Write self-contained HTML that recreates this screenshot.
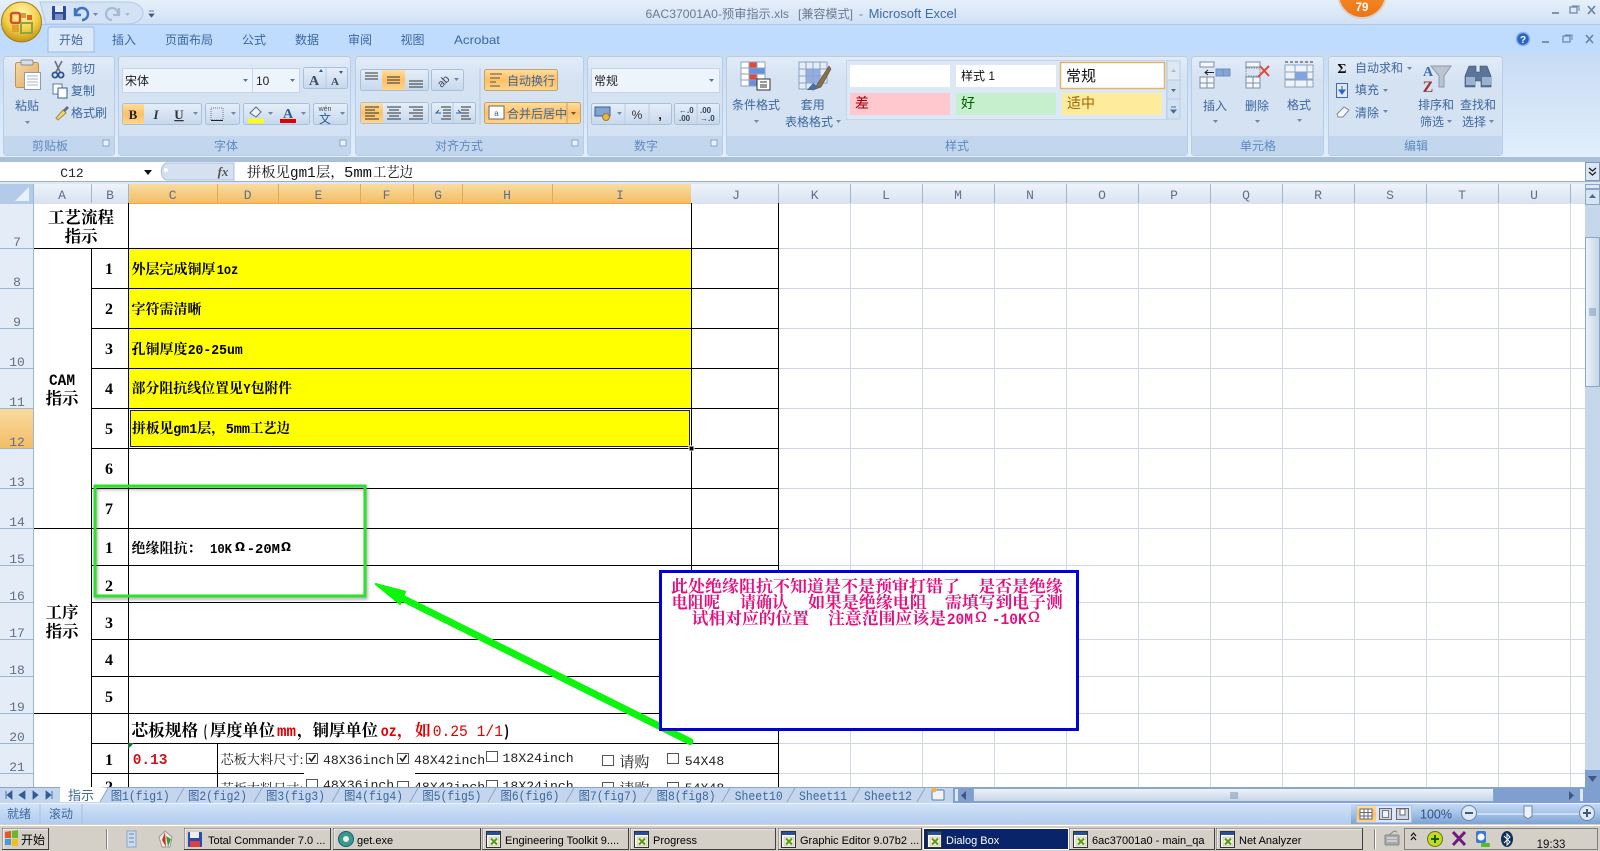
<!DOCTYPE html>
<html><head><meta charset="utf-8"><title>Excel</title>
<style>
html,body{margin:0;padding:0;background:#fff;width:1600px;height:851px;overflow:hidden}
svg{display:block}
text{white-space:pre}
.r{font:12px "Liberation Sans","Noto Sans CJK SC",sans-serif;fill:#3d679f}
.g{font:12px "Liberation Sans","Noto Sans CJK SC",sans-serif;fill:#5f89bf}
.c{font:bold 14px "Noto Serif CJK SC",serif;fill:#000}
.cl{font:bold 14px "Liberation Mono",monospace;fill:#000}
.n{font:bold 16px "Liberation Serif",serif;fill:#000;text-anchor:middle}
.h{font:bold 16.5px "Noto Serif CJK SC",serif;fill:#000;text-anchor:middle}
.h2{font:bold 16.3px "Noto Serif CJK SC",serif;fill:#000}
.h3{font:bold 16px "Liberation Mono",monospace;fill:#000}
.red{fill:#e00000}
.hd{font:13px "Liberation Mono",monospace;fill:#5e7089;text-anchor:middle}
.m{font:bold 16.6px "Noto Serif CJK SC",serif;fill:#e3107f}
.ml{font:bold 16px "Liberation Mono",monospace;fill:#e3107f}
.s{font:13px "Noto Serif CJK SC",serif;fill:#222}
.mo{font:13.2px "Liberation Mono",monospace;fill:#222}
.t{font:12.5px "Liberation Mono","Noto Sans CJK SC",monospace;fill:#3d679f}
.b{font:11px "Liberation Sans","Noto Sans CJK SC",sans-serif;fill:#000}
.f{font:14.3px "Noto Serif CJK SC",serif;fill:#111}
.fl{font:14.3px "Liberation Mono",monospace;fill:#111}
.mid{text-anchor:middle}
</style></head><body>
<svg xmlns="http://www.w3.org/2000/svg" width="1600" height="851" viewBox="0 0 1600 851">
<defs>
<linearGradient id="tb" x1="0" y1="0" x2="0" y2="1"><stop offset="0" stop-color="#e6f0fb"/><stop offset="1" stop-color="#cfe0f5"/></linearGradient>
<linearGradient id="rb" x1="0" y1="0" x2="0" y2="1"><stop offset="0" stop-color="#c6dbf5"/><stop offset="1" stop-color="#e2effc"/></linearGradient>
<linearGradient id="gp" x1="0" y1="0" x2="0" y2="1"><stop offset="0" stop-color="#e2ecf8"/><stop offset=".25" stop-color="#d5e2f2"/><stop offset="1" stop-color="#d3e2f3"/></linearGradient>
<linearGradient id="bt" x1="0" y1="0" x2="0" y2="1"><stop offset="0" stop-color="#e6eff9"/><stop offset=".5" stop-color="#d6e3f3"/><stop offset="1" stop-color="#c7d8ec"/></linearGradient>
<linearGradient id="or" x1="0" y1="0" x2="0" y2="1"><stop offset="0" stop-color="#ffdf9e"/><stop offset=".5" stop-color="#fdc066"/><stop offset="1" stop-color="#fdd58c"/></linearGradient>
<linearGradient id="ch" x1="0" y1="0" x2="0" y2="1"><stop offset="0" stop-color="#f9dca0"/><stop offset="1" stop-color="#f3bd66"/></linearGradient>
<linearGradient id="hd" x1="0" y1="0" x2="0" y2="1"><stop offset="0" stop-color="#eef3fa"/><stop offset="1" stop-color="#d7e2f1"/></linearGradient>
<linearGradient id="st" x1="0" y1="0" x2="0" y2="1"><stop offset="0" stop-color="#d4e4f8"/><stop offset=".45" stop-color="#c2d8f3"/><stop offset="1" stop-color="#b3cdef"/></linearGradient>
<linearGradient id="st2" x1="0" y1="0" x2="0" y2="1"><stop offset="0" stop-color="#c5d9f2"/><stop offset=".45" stop-color="#a6c3e8"/><stop offset="1" stop-color="#7da3d4"/></linearGradient>
<linearGradient id="th" x1="0" y1="0" x2="0" y2="1"><stop offset="0" stop-color="#eef3fa"/><stop offset="1" stop-color="#c4d4e8"/></linearGradient>
<linearGradient id="thv" x1="0" y1="0" x2="1" y2="0"><stop offset="0" stop-color="#eef3fa"/><stop offset="1" stop-color="#c4d4e8"/></linearGradient>
<radialGradient id="ob" cx=".5" cy=".3" r=".75"><stop offset="0" stop-color="#fff6b8"/><stop offset=".55" stop-color="#f5cf45"/><stop offset="1" stop-color="#b98a12"/></radialGradient>
<linearGradient id="oc" x1="0" y1="0" x2="0" y2="1"><stop offset="0" stop-color="#fb9a3c"/><stop offset="1" stop-color="#ee7514"/></linearGradient>
<linearGradient id="clip" x1="0" y1="0" x2="1" y2="1"><stop offset="0" stop-color="#f6d9a4"/><stop offset="1" stop-color="#e0aa5e"/></linearGradient>
<filter id="sh" x="-5%" y="-5%" width="110%" height="115%"><feDropShadow dx="1" dy="2" stdDeviation="1.5" flood-color="#555" flood-opacity=".55"/></filter>
<symbol id="xl" viewBox="0 0 16 18" overflow="visible"><rect x=".5" y=".5" width="14" height="16" fill="#fff" stroke="#333"/><rect x="1" y="1" width="13" height="3" fill="#2a4f9a"/><rect x="3" y="6" width="10" height="9" fill="#f4f4d0" stroke="#999" stroke-width=".5"/><path d="M5 7.500l6 6M11 7.500l-6 6" stroke="#5a9a1e" stroke-width="2"/></symbol>
</defs>

<!-- title bar -->
<rect width="1600" height="25" fill="url(#tb)"/>
<rect y="24" width="1600" height="1" fill="#aec8e6"/>
<rect y="25" width="1600" height="27" fill="#bfdbfd"/>
<rect y="52" width="1600" height="106" fill="url(#rb)"/>
<rect y="157" width="1600" height="5" fill="#a9bfda"/>

<!-- QAT -->
<path d="M40 2H128a15 11 0 0 1 0 22H46z" fill="#d3e2f4" stroke="#b3c9e4"/>
<rect x="52" y="6" width="14" height="14" fill="#2a4a9a" rx="1"/><rect x="55" y="6" width="8" height="6" fill="#e4eaf6"/><rect x="55" y="14" width="8" height="6" fill="#7a8fc4"/>
<path d="M76 14a6 6 0 1 1 6 6M75 8v7h6" fill="none" stroke="#3e72c4" stroke-width="2.400"/>
<path d="M93 13l5 0-2.500 3z" fill="#6f88aa"/>
<path d="M118 14a6 6 0 1 0-6 6M119 8v7h-6" fill="none" stroke="#a9bbd2" stroke-width="2.200"/>
<path d="M125 13l5 0-2.500 3z" fill="#a9bbd2"/>
<path d="M149 11h5M149 14l5 0-2.500 3z" stroke="#44597a" fill="#44597a" stroke-width=".8"/>

<!-- title -->
<text x="645.500" y="18" font-family="Liberation Sans,Noto Sans CJK SC,sans-serif" font-size="12" fill="#6b7a8e" textLength="143.500" lengthAdjust="spacingAndGlyphs">6AC37001A0-预审指示.xls</text>
<text x="798" y="18" font-family="Liberation Sans,Noto Sans CJK SC,sans-serif" font-size="12" fill="#6b7a8e" textLength="55" lengthAdjust="spacingAndGlyphs">[兼容模式]</text>
<text x="859" y="18" font-family="Liberation Sans,sans-serif" font-size="12" fill="#6b7a8e">-</text>
<text x="868.600" y="18" font-family="Liberation Sans,sans-serif" font-size="12.500" fill="#3f6ba8" textLength="88" lengthAdjust="spacingAndGlyphs">Microsoft Excel</text>

<!-- orange circle -->
<circle cx="1362" cy="-6" r="25" fill="#d9c7b5" opacity=".7"/>
<circle cx="1362" cy="-6" r="23" fill="url(#oc)"/>
<text x="1362" y="11" font-family="Liberation Sans,sans-serif" font-weight="bold" font-size="11.500" fill="#fff" text-anchor="middle">79</text>

<!-- win buttons -->
<g stroke="#6d84a3" fill="none" stroke-width="1.700">
<path d="M1552 13h7"/><rect x="1570" y="7" width="7" height="6" stroke-width="1.200"/><path d="M1572 6h7v5" stroke-width="1"/><path d="M1588 6l7 8M1595 6l-7 8"/>
<path d="M1542 42h7"/><rect x="1563" y="36" width="7" height="6" stroke-width="1.200"/><path d="M1565 35h7v5" stroke-width="1"/><path d="M1586 35l7 8M1593 35l-7 8"/>
</g>
<circle cx="1523" cy="39" r="6.500" fill="#2a64c8" stroke="#8cb0e2" stroke-width="1.500"/>
<text x="1523" y="43" font-family="Liberation Sans,sans-serif" font-size="10" font-weight="bold" fill="#fff" text-anchor="middle">?</text>

<!-- tabs -->
<path d="M48 52V30q0-3 3-3h40q3 0 3 3v22z" fill="#dbe8f8" stroke="#9fbcdf"/>
<text class="r mid" x="71" y="44">开始</text>
<text class="r mid" x="124" y="44">插入</text>
<text class="r mid" x="189" y="44">页面布局</text>
<text class="r mid" x="254" y="44">公式</text>
<text class="r mid" x="307" y="44">数据</text>
<text class="r mid" x="360" y="44">审阅</text>
<text class="r mid" x="412.500" y="44">视图</text>
<text class="r mid" x="477" y="44" textLength="46" lengthAdjust="spacingAndGlyphs">Acrobat</text>

<!-- groups -->
<g stroke="#b8cde5">
<rect x="3.500" y="56.500" width="111" height="99" rx="3" fill="url(#gp)"/>
<rect x="118.500" y="56.500" width="232" height="99" rx="3" fill="url(#gp)"/>
<rect x="355.500" y="56.500" width="228" height="99" rx="3" fill="url(#gp)"/>
<rect x="587.500" y="56.500" width="135" height="99" rx="3" fill="url(#gp)"/>
<rect x="726.500" y="56.500" width="461" height="99" rx="3" fill="url(#gp)"/>
<rect x="1191.500" y="56.500" width="132" height="99" rx="3" fill="url(#gp)"/>
<rect x="1328.500" y="56.500" width="174" height="99" rx="3" fill="url(#gp)"/>
</g>
<g fill="#c2d7ee">
<rect x="4" y="136" width="110" height="19"/><rect x="119" y="136" width="231" height="19"/><rect x="356" y="136" width="227" height="19"/><rect x="588" y="136" width="134" height="19"/><rect x="727" y="136" width="460" height="19"/><rect x="1192" y="136" width="131" height="19"/><rect x="1329" y="136" width="173" height="19"/>
</g>
<text class="g mid" x="50" y="150">剪贴板</text>
<text class="g mid" x="226" y="150">字体</text>
<text class="g mid" x="459" y="150">对齐方式</text>
<text class="g mid" x="646" y="150">数字</text>
<text class="g mid" x="957" y="150">样式</text>
<text class="g mid" x="1258" y="150">单元格</text>
<text class="g mid" x="1416" y="150">编辑</text>
<g fill="#eaf1fa" stroke="#7d99bd" stroke-width=".8"><rect x="103" y="140" width="6" height="6"/><rect x="340" y="140" width="6" height="6"/><rect x="572" y="140" width="6" height="6"/><rect x="711" y="140" width="6" height="6"/></g>

<!-- clipboard -->
<rect x="15.500" y="62.500" width="23" height="25" rx="2" fill="url(#clip)" stroke="#c0914f"/>
<rect x="21" y="60" width="12" height="5" rx="1" fill="#d7dfe9" stroke="#8a8f99"/>
<rect x="24.500" y="72.500" width="16" height="17" fill="#fff" stroke="#8d9bb0"/>
<path d="M27 76h11M27 79h11M27 82h11M27 85h11" stroke="#a8b4c5"/>
<text class="r mid" x="27" y="110">粘贴</text>
<path d="M25 121l5 0-2.500 3z" fill="#6f88aa"/>
<path d="M55 61l5 11M62 61l-6 11" stroke="#6a7480" stroke-width="1.600"/><circle cx="55" cy="75" r="2.600" fill="none" stroke="#2d4f96" stroke-width="1.800"/><circle cx="61" cy="75" r="2.600" fill="none" stroke="#2d4f96" stroke-width="1.800"/>
<text class="r" x="71" y="73">剪切</text>
<rect x="53" y="84" width="9" height="10" fill="#fff" stroke="#5f7ba6"/><rect x="58" y="88" width="9" height="10" fill="#fff" stroke="#2f5c98"/>
<text class="r" x="71" y="95">复制</text>
<path d="M56 118l7-8 3 3-8 7z" fill="#f2d27a" stroke="#a98a3a"/><path d="M63 110l4-4 2 2-4 4z" fill="#5d6d85"/>
<text class="r" x="71" y="117">格式刷</text>

<!-- font -->
<rect x="122.500" y="68.500" width="130" height="24" fill="#eef4fc" stroke="#c5d6ea"/>
<rect x="252.500" y="68.500" width="47" height="24" fill="#eef4fc" stroke="#c5d6ea"/>
<text x="125" y="85" font-family="Noto Sans CJK SC,sans-serif" font-size="12" fill="#222">宋体</text>
<text x="256" y="85" font-family="Liberation Sans,sans-serif" font-size="12" fill="#222">10</text>
<path d="M243 79l5 0-2.500 3zM290 79l5 0-2.500 3z" fill="#5c7699"/>
<rect x="303.500" y="67.500" width="44" height="21" rx="2" fill="url(#bt)" stroke="#a9c0dc"/><path d="M326 68v20" stroke="#b6cbe3"/>
<text x="309" y="85" font-family="Liberation Serif,serif" font-weight="bold" font-size="14" fill="#3a4a60">A</text><path d="M319 72l4 0-2 -3z" fill="#2f5c98"/>
<text x="331" y="85" font-family="Liberation Serif,serif" font-weight="bold" font-size="11" fill="#3a4a60">A</text><path d="M339 71l4 0-2 3z" fill="#2f5c98"/>

<rect x="122.500" y="103.500" width="79" height="21" rx="2" fill="url(#bt)" stroke="#a9c0dc"/>
<rect x="123" y="104" width="21" height="20" fill="url(#or)"/>
<text x="133" y="119" font-family="Liberation Serif,serif" font-weight="bold" font-size="13" fill="#222" text-anchor="middle">B</text>
<text x="156" y="119" font-family="Liberation Serif,serif" font-style="italic" font-weight="bold" font-size="13" fill="#333" text-anchor="middle">I</text>
<text x="179" y="119" font-family="Liberation Serif,serif" font-weight="bold" font-size="13" fill="#333" text-anchor="middle" text-decoration="underline">U</text>
<path d="M193 112l5 0-2.500 3z" fill="#6f88aa"/>
<rect x="205.500" y="103.500" width="34" height="21" rx="2" fill="url(#bt)" stroke="#a9c0dc"/>
<rect x="211" y="108" width="12" height="12" fill="none" stroke="#6a7a90" stroke-dasharray="1 1"/><path d="M211 120.500h12" stroke="#222"/><path d="M231 112l5 0-2.500 3z" fill="#6f88aa"/>
<rect x="243.500" y="103.500" width="66" height="21" rx="2" fill="url(#bt)" stroke="#a9c0dc"/>
<path d="M250 113l6-6 5 5-5 5z" fill="#eef2f8" stroke="#5a6a80"/><rect x="248" y="119" width="16" height="4" fill="#ff0"/><path d="M268 112l5 0-2.500 3z" fill="#6f88aa"/>
<text x="288" y="118" font-family="Liberation Serif,serif" font-weight="bold" font-size="14" fill="#2f5c98" text-anchor="middle">A</text><rect x="280" y="119" width="16" height="4" fill="#e00000"/><path d="M301 112l5 0-2.500 3z" fill="#6f88aa"/>
<rect x="313.500" y="103.500" width="34" height="21" rx="2" fill="url(#bt)" stroke="#a9c0dc"/>
<text x="325" y="123" font-family="Noto Sans CJK SC,sans-serif" font-size="12" fill="#2f5c98" text-anchor="middle">文</text>
<text x="325" y="111" font-family="Liberation Sans,sans-serif" font-size="7" fill="#445" text-anchor="middle">wén</text><path d="M340 112l5 0-2.500 3z" fill="#6f88aa"/>

<!-- align -->
<rect x="360.500" y="69.500" width="68" height="21" rx="2" fill="url(#bt)" stroke="#a9c0dc"/>
<rect x="382" y="70" width="23" height="20" fill="url(#or)"/>
<path d="M365 73h13M365 76h13M365 79h13M387 77h13M387 80h13M387 83h13M409 81h14M409 84h14M409 87h14" stroke="#333" stroke-width="1.100"/>
<rect x="431.500" y="69.500" width="32" height="21" rx="2" fill="url(#bt)" stroke="#a9c0dc"/>
<text x="443" y="85" font-family="Liberation Sans,sans-serif" font-size="11" fill="#445" transform="rotate(-45 443 81)" text-anchor="middle">ab</text><path d="M454 78l5 0-2.500 3z" fill="#6f88aa"/>
<path d="M480 68v57" stroke="#b6cbe3"/>
<rect x="484.500" y="69.500" width="73" height="21" rx="2" fill="url(#or)" stroke="#c2a36e"/>
<path d="M490 74h12M490 78h10M490 82h6M490 86h10" stroke="#555"/>
<text class="r" x="507" y="85">自动换行</text>
<rect x="360.500" y="102.500" width="68" height="21" rx="2" fill="url(#bt)" stroke="#a9c0dc"/>
<rect x="361" y="103" width="22" height="20" fill="url(#or)"/>
<path d="M365 107h14M365 110h10M365 113h14M365 116h10M365 119h14M387 107h14M389 110h10M387 113h14M389 116h10M387 119h14M409 107h14M413 110h10M409 113h14M413 116h10M409 119h14" stroke="#333"/>
<rect x="431.500" y="102.500" width="44" height="21" rx="2" fill="url(#bt)" stroke="#a9c0dc"/><path d="M453 103v20" stroke="#b6cbe3"/>
<path d="M441 107h10M443 110h8M443 113h8M443 116h8M441 119h10M461 107h10M461 110h8M461 113h8M461 116h8M461 119h10" stroke="#333"/><path d="M441 113h-5l3-3M456 113h5l-3-3" stroke="#2f5c98" fill="none"/>
<rect x="484.500" y="102.500" width="96" height="21" rx="2" fill="url(#or)" stroke="#c2a36e"/><path d="M567 103v20" stroke="#c2a36e"/>
<rect x="489" y="106" width="15" height="13" fill="#fff" stroke="#667"/><text x="496.500" y="116" font-family="Liberation Sans,sans-serif" font-size="8" fill="#2f5c98" text-anchor="middle">a</text>
<text class="r" x="507" y="118">合并后居中</text>
<path d="M571 112l5 0-2.500 3z" fill="#6a5a30"/>

<!-- number -->
<rect x="591.500" y="68.500" width="128" height="24" fill="#eef4fc" stroke="#c5d6ea"/>
<text x="594" y="85" font-family="Noto Sans CJK SC,sans-serif" font-size="12" fill="#222">常规</text>
<path d="M709 79l5 0-2.500 3z" fill="#5c7699"/>
<rect x="591.500" y="103.500" width="80" height="21" rx="2" fill="url(#bt)" stroke="#a9c0dc"/><path d="M625 104v20M649 104v20" stroke="#b6cbe3"/>
<rect x="595" y="107" width="15" height="9" fill="#7fa4d8" stroke="#3e5e94"/><circle cx="606" cy="117" r="3.500" fill="#e8b93c" stroke="#a07a20"/>
<path d="M617 112l5 0-2.500 3z" fill="#6f88aa"/>
<text x="637" y="119" font-family="Liberation Sans,sans-serif" font-size="12" fill="#333" text-anchor="middle">%</text>
<text x="660" y="119" font-family="Liberation Sans,sans-serif" font-weight="bold" font-size="13" fill="#222" text-anchor="middle">,</text>
<rect x="674.500" y="103.500" width="45" height="21" rx="2" fill="url(#bt)" stroke="#a9c0dc"/><path d="M697 104v20" stroke="#b6cbe3"/>
<text x="679" y="113" font-family="Liberation Sans,sans-serif" font-size="8" font-weight="bold" fill="#345">←.0</text><text x="679" y="121" font-family="Liberation Sans,sans-serif" font-size="8" font-weight="bold" fill="#345">.00</text>
<text x="700" y="113" font-family="Liberation Sans,sans-serif" font-size="8" font-weight="bold" fill="#345">.00</text><text x="700" y="121" font-family="Liberation Sans,sans-serif" font-size="8" font-weight="bold" fill="#345">→.0</text>

<!-- styles -->
<g stroke="#8ea3bf" fill="#fff"><rect x="741" y="62" width="8" height="6"/><rect x="749" y="62" width="8" height="6" fill="#e04a3a"/><rect x="757" y="62" width="8" height="6"/><rect x="741" y="68" width="8" height="6"/><rect x="749" y="68" width="16" height="6" fill="#6a8fdc"/><rect x="741" y="74" width="8" height="6"/><rect x="749" y="74" width="8" height="6" fill="#e04a3a"/><rect x="757" y="74" width="8" height="6"/><rect x="741" y="80" width="8" height="6"/><rect x="749" y="80" width="8" height="6" fill="#6a8fdc"/></g>
<rect x="757" y="79" width="13" height="11" fill="#fff" stroke="#333"/><path d="M760 82h7M760 85h7M760 87h7" stroke="#333"/>
<text class="r mid" x="756" y="109">条件格式</text><path d="M754 120l5 0-2.500 3z" fill="#6f88aa"/>
<g stroke="#8ea3bf" fill="#e3ecf8"><rect x="799" y="62" width="7" height="7"/><rect x="806" y="62" width="7" height="7"/><rect x="813" y="62" width="7" height="7"/><rect x="820" y="62" width="7" height="7"/><rect x="799" y="69" width="7" height="7"/><rect x="806" y="69" width="7" height="7" fill="#92aee6"/><rect x="813" y="69" width="7" height="7" fill="#92aee6"/><rect x="820" y="69" width="7" height="7"/><rect x="799" y="76" width="7" height="7"/><rect x="806" y="76" width="7" height="7" fill="#92aee6"/><rect x="813" y="76" width="7" height="7" fill="#92aee6"/><rect x="820" y="76" width="7" height="7"/><rect x="799" y="83" width="7" height="6"/><rect x="806" y="83" width="7" height="6"/></g>
<path d="M829 66l-11 17-5 7 8-3 10-18z" fill="#8a7050" stroke="#5a4a30" stroke-width=".6"/><path d="M813 83l6 4-6 3h-6z" fill="#4a6ca8"/>
<text class="r mid" x="812.700" y="109">套用</text>
<text class="r" x="785" y="126">表格格式</text><path d="M836 120l5 0-2.500 3z" fill="#6f88aa"/>
<rect x="846.500" y="60.500" width="320" height="59" fill="#dce8f6" stroke="#c3d5ea"/>
<rect x="850" y="65" width="100" height="22" fill="#fff"/>
<rect x="956" y="65" width="100" height="22" fill="#fff"/>
<text x="961" y="80" font-family="Liberation Sans,Noto Sans CJK SC,sans-serif" font-size="12" fill="#111">样式 1</text>
<rect x="1060.500" y="62.500" width="104" height="26" fill="#fff" stroke="#e2b468" stroke-width="1.500"/>
<text x="1066" y="81" font-family="Noto Sans CJK SC,sans-serif" font-size="15" fill="#111">常规</text>
<rect x="850" y="93" width="100" height="22" fill="#ffc7ce"/><text x="855" y="108" font-family="Noto Sans CJK SC,sans-serif" font-size="14" fill="#9c0006">差</text>
<rect x="956" y="93" width="100" height="22" fill="#c6efce"/><text x="961" y="108" font-family="Noto Sans CJK SC,sans-serif" font-size="14" fill="#006100">好</text>
<rect x="1062" y="93" width="100" height="22" fill="#ffeb9c"/><text x="1067" y="108" font-family="Noto Sans CJK SC,sans-serif" font-size="14" fill="#9c6500">适中</text>
<rect x="1167" y="61" width="13" height="19" fill="#dfe9f5" stroke="#b9cde4"/><rect x="1167" y="80" width="13" height="19" fill="#d2e1f2" stroke="#b9cde4"/><rect x="1167" y="99" width="13" height="20" fill="#d2e1f2" stroke="#b9cde4"/>
<path d="M1171 72l5 0-2.500-3z" fill="#a9bbd2"/><path d="M1171 89l5 0-2.500 3z" fill="#4f6b90"/><path d="M1171 107h5M1171 110l5 0-2.500 3z" stroke="#4f6b90" fill="#4f6b90"/>

<!-- cells group -->
<g stroke="#7a8ea8" fill="#f4f7fb"><rect x="1200" y="62" width="14" height="5"/><rect x="1200" y="77" width="7" height="6"/><rect x="1207" y="77" width="7" height="6"/><rect x="1200" y="83" width="7" height="5"/><rect x="1207" y="83" width="7" height="5"/><rect x="1216" y="69" width="7" height="7" fill="#7ea6e0"/><rect x="1223" y="69" width="7" height="7" fill="#7ea6e0"/></g>
<path d="M1205 72.500h9M1208 70l-3 2.500 3 2.500" stroke="#222" fill="none"/>
<text class="r mid" x="1215" y="110">插入</text><path d="M1213 120l5 0-2.500 3z" fill="#6f88aa"/>
<g stroke="#7a8ea8" fill="#f4f7fb"><rect x="1246" y="62" width="14" height="5"/><rect x="1246" y="77" width="7" height="6"/><rect x="1253" y="77" width="7" height="6"/><rect x="1246" y="83" width="7" height="5"/><rect x="1253" y="83" width="7" height="5"/><rect x="1246" y="68" width="14" height="8" stroke-dasharray="1.500 1" fill="none"/></g>
<path d="M1260 66l9 10M1269 66l-11 11" stroke="#e0483a" stroke-width="2"/>
<text class="r mid" x="1257" y="110">删除</text><path d="M1255 120l5 0-2.500 3z" fill="#6f88aa"/>
<g stroke="#8ea3bf" fill="#eef3fa"><rect x="1285" y="65" width="10" height="7"/><rect x="1295" y="65" width="12" height="7"/><rect x="1307" y="65" width="6" height="7"/><rect x="1285" y="72" width="10" height="7"/><rect x="1295" y="72" width="12" height="8" fill="#7ea6e0"/><rect x="1307" y="72" width="6" height="7"/><rect x="1285" y="80" width="10" height="7"/><rect x="1295" y="80" width="12" height="7"/><rect x="1307" y="80" width="6" height="7"/></g>
<path d="M1285 62h28" stroke="#333" stroke-dasharray="3 2"/>
<text class="r mid" x="1299" y="109">格式</text><path d="M1297 119l5 0-2.500 3z" fill="#6f88aa"/>

<!-- editing -->
<text x="1342" y="73" font-family="Liberation Serif,serif" font-weight="bold" font-size="14" fill="#111" text-anchor="middle">Σ</text>
<text class="r" x="1355" y="72">自动求和</text><path d="M1407 67l5 0-2.500 3z" fill="#6f88aa"/>
<rect x="1336.500" y="83.500" width="11" height="14" fill="#dfe9f6" stroke="#3e6ab0"/><path d="M1342 86v7M1339 90l3 4 3-4z" stroke="#2a64c8" fill="#2a64c8"/>
<text class="r" x="1355" y="94">填充</text><path d="M1383 89l5 0-2.500 3z" fill="#6f88aa"/>
<path d="M1337 114l7-7 5 3-6 7h-5z" fill="#f4f6fa" stroke="#7d8aa0"/>
<text class="r" x="1355" y="117">清除</text><path d="M1383 110l5 0-2.500 3z" fill="#6f88aa"/>
<text x="1428" y="76" font-family="Liberation Serif,serif" font-weight="bold" font-size="14" fill="#3e6ab0" text-anchor="middle">A</text>
<text x="1428" y="92" font-family="Liberation Serif,serif" font-weight="bold" font-size="16" fill="#9a3a3a" text-anchor="middle">Z</text>
<path d="M1431 66h20l-7 10v11h-5V76z" fill="#bcc4cf" stroke="#8e98a6"/>
<text class="r mid" x="1436" y="109">排序和</text>
<text class="r" x="1420" y="126">筛选</text><path d="M1447 120l5 0-2.500 3z" fill="#6f88aa"/>
<path d="M1465 76l4-10h7v6h4v-6h7l4 10v11h-10v-6h-6v6h-10z" fill="#5b7599" stroke="#3a4f6e" stroke-width=".6"/>
<rect x="1466" y="77" width="9" height="8" fill="#9ab3d1"/><rect x="1482" y="77" width="9" height="8" fill="#9ab3d1"/>
<text class="r mid" x="1478" y="109">查找和</text>
<text class="r" x="1462" y="126">选择</text><path d="M1489 120l5 0-2.500 3z" fill="#6f88aa"/>

<!-- office button -->
<circle cx="21.500" cy="22" r="20" fill="url(#ob)" stroke="#a37d14" stroke-width="1"/>
<rect x="11" y="13" width="9" height="10" rx="2" fill="none" stroke="#d2502a" stroke-width="2.500"/>
<rect x="21" y="13" width="5" height="5" fill="#d2a22a"/><rect x="27" y="15" width="5" height="5" fill="#d46a2a"/>
<rect x="12" y="25" width="7" height="7" fill="#e2a030"/><rect x="21" y="23" width="11" height="10" fill="none" stroke="#8aa83a" stroke-width="2"/>

<!-- formula bar -->
<rect y="162" width="1600" height="19" fill="#fff"/>
<rect y="181" width="1600" height="1" fill="#9db1c9"/>
<rect y="182" width="1600" height="2" fill="#dde8f5"/>
<text x="72" y="177" font-family="Liberation Mono,monospace" font-size="13" fill="#222" text-anchor="middle">C12</text>
<path d="M144 170h8l-4 5z" fill="#111"/>
<path d="M166 163a7 9 0 0 0 0 17h68v-17z" fill="#d5e1ef" stroke="#a9c0dc"/>
<circle cx="166" cy="170" r="2" fill="#fff"/>
<text x="223" y="176" font-family="Liberation Serif,serif" font-style="italic" font-weight="bold" font-size="13" fill="#555" text-anchor="middle">fx</text>
<text class="f" x="247" y="177">拼板见</text>
<text class="fl" x="290" y="177" textLength="25.700" lengthAdjust="spacingAndGlyphs">gm1</text>
<text class="f" x="316" y="177">层，</text>
<text class="fl" x="344" y="177" textLength="28" lengthAdjust="spacingAndGlyphs">5mm</text>
<text class="f" x="373" y="177" textLength="40" lengthAdjust="spacingAndGlyphs">工艺边</text>
<rect x="1585.500" y="162.500" width="14" height="18" fill="#dbe7f5" stroke="#7f9ab9"/>
<path d="M1589 168l3.500 3 3.500-3M1589 172l3.500 3 3.500-3" fill="none" stroke="#222" stroke-width="1.300"/>

<!-- sheet -->
<rect x="0" y="184" width="1585" height="603" fill="#fff"/>
<rect x="128" y="248" width="563" height="200" fill="#ff0"/>

<!-- gridlines -->
<path d="M850.500 203V787M922.500 203V787M994.500 203V787M1066.500 203V787M1138.500 203V787M1210.500 203V787M1282.500 203V787M1354.500 203V787M1426.500 203V787M1498.500 203V787M1570.500 203V787
M778 248.500H1585M778 288.500H1585M778 328.500H1585M778 368.500H1585M778 408.500H1585M778 448.500H1585M778 488.500H1585M778 528.500H1585M778 565.500H1585M778 602.500H1585M778 639.500H1585M778 676.500H1585M778 713.500H1585M778 743.500H1585M778 773.500H1585" stroke="#d0d7e5" fill="none"/>

<!-- headers -->
<rect x="0" y="184" width="1585" height="20" fill="url(#hd)"/>
<rect x="128" y="184" width="563" height="19" fill="url(#ch)"/>
<rect x="0" y="184" width="34" height="20" fill="#b3cbe8"/>
<path d="M29 187v14h-14z" fill="#e8f0f9"/>
<path d="M91.500 184v19M128.500 184v19M778.500 184v19M850.500 184v19M922.500 184v19M994.500 184v19M1066.500 184v19M1138.500 184v19M1210.500 184v19M1282.500 184v19M1354.500 184v19M1426.500 184v19M1498.500 184v19M1570.500 184v19M33.500 184v604" stroke="#9eb6ce" fill="none"/>
<path d="M217.500 184v19M278.500 184v19M360.500 184v19M413.500 184v19M462.500 184v19M552.500 184v19" stroke="#e5a854"/>
<rect x="128" y="203" width="563" height="1" fill="#f0a63f"/>
<text class="hd" x="62" y="199">A</text><text class="hd" x="110" y="199">B</text><text class="hd" x="172.600" y="199">C</text><text class="hd" x="247.600" y="199">D</text><text class="hd" x="318.400" y="199">E</text><text class="hd" x="386.500" y="199">F</text><text class="hd" x="438" y="199">G</text><text class="hd" x="507" y="199">H</text><text class="hd" x="620" y="199">I</text><text class="hd" x="736" y="199">J</text><text class="hd" x="814.600" y="199">K</text><text class="hd" x="886" y="199">L</text><text class="hd" x="958" y="199">M</text><text class="hd" x="1030" y="199">N</text><text class="hd" x="1102" y="199">O</text><text class="hd" x="1174" y="199">P</text><text class="hd" x="1246" y="199">Q</text><text class="hd" x="1318" y="199">R</text><text class="hd" x="1390" y="199">S</text><text class="hd" x="1462" y="199">T</text><text class="hd" x="1534" y="199">U</text>
<rect x="0" y="204" width="33" height="583" fill="#e4ecf7"/>
<rect x="0" y="408" width="33" height="40" fill="url(#ch)"/>
<path d="M0 248.500h33M0 288.500h33M0 328.500h33M0 368.500h33M0 408.500h33M0 448.500h33M0 488.500h33M0 528.500h33M0 565.500h33M0 602.500h33M0 639.500h33M0 676.500h33M0 713.500h33M0 743.500h33M0 773.500h33" stroke="#9eb6ce"/>
<text class="hd" x="17" y="246">7</text><text class="hd" x="17" y="286">8</text><text class="hd" x="17" y="326">9</text><text class="hd" x="17" y="366">10</text><text class="hd" x="17" y="406">11</text><text class="hd" x="17" y="446">12</text><text class="hd" x="17" y="486">13</text><text class="hd" x="17" y="526">14</text><text class="hd" x="17" y="563">15</text><text class="hd" x="17" y="600">16</text><text class="hd" x="17" y="637">17</text><text class="hd" x="17" y="674">18</text><text class="hd" x="17" y="711">19</text><text class="hd" x="17" y="741">20</text><text class="hd" x="17" y="771">21</text>

<!-- table borders -->
<path d="M34 248.500H778M91 288.500H778M91 328.500H778M91 368.500H778M91 408.500H778M91 448.500H778M91 488.500H778M34 528.500H778M91 565.500H778M91 602.500H778M91 639.500H778M91 676.500H778M34 713.500H778M91 743.500H778M91 773.500H304M415 773.500H778
M91.500 248V787M128.500 203V787M691.500 203V713M778.500 203V787M217.500 743V787" stroke="#000" fill="none"/>

<!-- selection -->
<rect x="128.500" y="408.500" width="563" height="40" fill="none" stroke="#000"/>
<rect x="129.500" y="409.500" width="561" height="38" fill="none" stroke="#fff"/>
<rect x="130.500" y="410.500" width="559" height="36" fill="none" stroke="#222"/>
<rect x="689" y="446" width="5" height="5" fill="#000" stroke="#fff"/>

<!-- cell text -->
<text class="h" x="81" y="223">工艺流程</text><text class="h" x="81" y="242">指示</text>
<text class="h3" x="49" y="385" textLength="26" lengthAdjust="spacingAndGlyphs">CAM</text><text class="h" x="62" y="404">指示</text>
<text class="h" x="62" y="618">工序</text><text class="h" x="62" y="637">指示</text>
<text class="n" x="109" y="274">1</text><text class="n" x="109" y="314">2</text><text class="n" x="109" y="354">3</text><text class="n" x="109" y="394">4</text><text class="n" x="109" y="434">5</text><text class="n" x="109" y="474">6</text><text class="n" x="109" y="514">7</text><text class="n" x="109" y="553">1</text><text class="n" x="109" y="591">2</text><text class="n" x="109" y="628">3</text><text class="n" x="109" y="665">4</text><text class="n" x="109" y="702">5</text><text class="n" x="109" y="765">1</text><text class="n" x="109" y="792">2</text>

<text class="c" x="131.500" y="274">外层完成铜厚</text><text class="cl" x="216.700" y="274" textLength="21.600" lengthAdjust="spacingAndGlyphs">1oz</text>
<text class="c" x="131.500" y="314">字符需清晰</text>
<text class="c" x="131.500" y="354">孔铜厚度</text><text class="cl" x="187.700" y="354" textLength="55" lengthAdjust="spacingAndGlyphs">20-25um</text>
<text class="c" x="131.500" y="393" textLength="111.500" lengthAdjust="spacingAndGlyphs">部分阻抗线位置见</text><text class="cl" x="243.500" y="393" textLength="7" lengthAdjust="spacingAndGlyphs">Y</text><text class="c" x="250.700" y="393" textLength="41.300" lengthAdjust="spacingAndGlyphs">包附件</text>
<text class="c" x="132" y="433" textLength="41.300" lengthAdjust="spacingAndGlyphs">拼板见</text><text class="cl" x="173.300" y="433" textLength="24" lengthAdjust="spacingAndGlyphs">gm1</text><text class="c" x="197.300" y="433">层，</text><text class="cl" x="225.700" y="433" textLength="24.300" lengthAdjust="spacingAndGlyphs">5mm</text><text class="c" x="250" y="433" textLength="40" lengthAdjust="spacingAndGlyphs">工艺边</text>
<text class="c" x="131.500" y="553">绝缘阻抗：</text><text class="cl" x="210" y="553" textLength="22" lengthAdjust="spacingAndGlyphs">10K</text><text class="cl" x="235" y="551" textLength="10" lengthAdjust="spacingAndGlyphs">Ω</text><text class="cl" x="246.700" y="553" textLength="33.300" lengthAdjust="spacingAndGlyphs">-20M</text><text class="cl" x="281" y="551" textLength="10" lengthAdjust="spacingAndGlyphs">Ω</text>

<text class="h2" x="131.500" y="736" textLength="66.500" lengthAdjust="spacingAndGlyphs">芯板规格</text>
<text class="h3" x="203" y="736" textLength="5" lengthAdjust="spacingAndGlyphs">(</text>
<text class="h2" x="210" y="736" textLength="65" lengthAdjust="spacingAndGlyphs">厚度单位</text>
<text class="h3 red" x="277" y="736" textLength="19" lengthAdjust="spacingAndGlyphs">mm</text>
<text class="h2" x="297" y="736">，</text>
<text class="h2" x="312.700" y="736" textLength="65.300" lengthAdjust="spacingAndGlyphs">铜厚单位</text>
<text class="h3 red" x="380.700" y="736" textLength="16" lengthAdjust="spacingAndGlyphs">oz</text>
<text class="h2 red" x="397" y="736">，</text>
<text class="h2 red" x="415" y="736" textLength="15.700" lengthAdjust="spacingAndGlyphs">如</text>
<text x="432.700" y="736" font-family="Liberation Mono,monospace" font-size="16" fill="#e00000" textLength="70.300" lengthAdjust="spacingAndGlyphs">0.25 1/1</text>
<text class="h3" x="503" y="736" textLength="7" lengthAdjust="spacingAndGlyphs">)</text>
<text x="132.700" y="764" font-family="Liberation Mono,monospace" font-weight="bold" font-size="14.500" fill="#c8171c">0.13</text>
<path d="M128 743h6l-6 6z" fill="#107030"/>

<g>
<text class="s" x="220.700" y="764" textLength="83" lengthAdjust="spacingAndGlyphs">芯板大料尺寸:</text>
<g fill="#fff" stroke="#555"><rect x="306.500" y="753.500" width="11" height="10"/><rect x="397.500" y="753.500" width="11" height="10"/><rect x="486.500" y="751.500" width="11" height="10"/><rect x="602.500" y="755.500" width="11" height="10"/><rect x="667.500" y="753.500" width="11" height="10"/></g>
<path d="M309 758l2.500 3 4-6M400 758l2.500 3 4-6" fill="none" stroke="#222" stroke-width="1.600"/>
<text class="mo" x="323" y="764">48X36inch</text><text class="mo" x="414" y="764">48X42inch</text><text class="mo" x="502.500" y="762">18X24inch</text>
<text class="s" x="619.400" y="767" style="font-size:15px">请购</text><text class="mo" x="684.700" y="765">54X48</text>
</g>
<g>
<text class="s" x="220.700" y="793" textLength="83" lengthAdjust="spacingAndGlyphs">芯板大料尺寸:</text>
<g fill="#fff" stroke="#555"><rect x="306.500" y="779.500" width="11" height="10"/><rect x="397.500" y="781.500" width="11" height="10"/><rect x="486.500" y="780.500" width="11" height="10"/><rect x="602.500" y="782.500" width="11" height="10"/><rect x="667.500" y="782.500" width="11" height="10"/></g>
<text class="mo" x="323" y="789">48X36inch</text><text class="mo" x="414" y="791">48X42inch</text><text class="mo" x="502.500" y="790">18X24inch</text>
<text class="s" x="619.400" y="794" style="font-size:15px">请购</text><text class="mo" x="684.700" y="792">54X48</text>
</g>

<!-- green rect -->
<rect x="95" y="486" width="270" height="110" fill="none" stroke="#2ee02e" stroke-width="3" filter="url(#sh)"/>

<!-- arrow -->
<path d="M375.700 584l29.300 7.700-5 12.300z" fill="#0cf50c" stroke="#0cf50c" stroke-width="2" stroke-linejoin="round"/>
<path d="M400 597L690 741.500" stroke="#0cf50c" stroke-width="7" stroke-linecap="round"/>

<!-- box -->
<rect x="660.500" y="571.500" width="417" height="158" fill="#fff" stroke="#0000d8" stroke-width="3"/>
<text class="m" x="671" y="592" textLength="289" lengthAdjust="spacingAndGlyphs">此处绝缘阻抗不知道是不是预审打错了</text>
<text class="m" x="978.300" y="592" textLength="84.400" lengthAdjust="spacingAndGlyphs">是否是绝缘</text>
<text class="m" x="671.700" y="608" textLength="48.300" lengthAdjust="spacingAndGlyphs">电阻呢</text>
<text class="m" x="740" y="608" textLength="48" lengthAdjust="spacingAndGlyphs">请确认</text>
<text class="m" x="808" y="608" textLength="118.700" lengthAdjust="spacingAndGlyphs">如果是绝缘电阻</text>
<text class="m" x="945" y="608" textLength="117.700" lengthAdjust="spacingAndGlyphs">需填写到电子测</text>
<text class="m" x="691.700" y="624" textLength="117.300" lengthAdjust="spacingAndGlyphs">试相对应的位置</text>
<text class="m" x="828" y="624" textLength="118" lengthAdjust="spacingAndGlyphs">注意范围应该是</text>
<text class="ml" x="946.700" y="624" textLength="26.300" lengthAdjust="spacingAndGlyphs">20M</text>
<text class="ml" x="975" y="622" textLength="12" lengthAdjust="spacingAndGlyphs" style="font-weight:normal">Ω</text>
<text class="ml" x="991.700" y="624" textLength="35" lengthAdjust="spacingAndGlyphs">-10K</text>
<text class="ml" x="1028" y="622" textLength="12" lengthAdjust="spacingAndGlyphs" style="font-weight:normal">Ω</text>

<!-- v scrollbar -->
<rect x="1585" y="184" width="15" height="603" fill="#c6d7ec"/>
<rect x="1585.500" y="184.500" width="14" height="4" fill="#dfe9f5" stroke="#8ba6c6"/>
<rect x="1585.500" y="189.500" width="14" height="15" fill="#d7e3f2" stroke="#8ba6c6"/>
<path d="M1589 198l3.500-4 3.500 4z" fill="#4f6b90"/>
<rect x="1585.500" y="237.500" width="14" height="149" fill="url(#thv)" stroke="#8ba6c6"/>
<path d="M1589 309h7M1589 311h7M1589 313h7M1589 315h7" stroke="#7a93b2"/>

<!-- tab bar -->
<rect y="787" width="1600" height="16" fill="#c3d6ed"/>
<rect y="787" width="1600" height="1" fill="#8aa6c8"/>
<path d="M6 791v8M7 795l5-4v8zM25 791v8l-6-4zM33 791l5 4-5 4zM46 791l5 4-5 4zM52 791v8" fill="#2f5c98" stroke="#2f5c98" stroke-width=".8"/>
<path d="M60 787h40l8 1-8 14H60z" fill="#fff"/>
<g stroke="#8ca7c7" fill="none"><path d="M100 802l8-14M176 802l8-14M254 802l8-14M332 802l8-14M410 802l8-14M488 802l8-14M566 802l8-14M644 802l8-14M722 802l8-14M787 802l8-14M852 802l8-14M917 802l8-14"/></g>
<text class="t" x="68" y="800" style="font-size:13px">指示</text>
<text class="t" x="110.700" y="800" textLength="59" lengthAdjust="spacingAndGlyphs">图1(fig1)</text>
<text class="t" x="188" y="800" textLength="59" lengthAdjust="spacingAndGlyphs">图2(fig2)</text>
<text class="t" x="266" y="800" textLength="59" lengthAdjust="spacingAndGlyphs">图3(fig3)</text>
<text class="t" x="344" y="800" textLength="59" lengthAdjust="spacingAndGlyphs">图4(fig4)</text>
<text class="t" x="422.400" y="800" textLength="59" lengthAdjust="spacingAndGlyphs">图5(fig5)</text>
<text class="t" x="500.500" y="800" textLength="59" lengthAdjust="spacingAndGlyphs">图6(fig6)</text>
<text class="t" x="578.600" y="800" textLength="59" lengthAdjust="spacingAndGlyphs">图7(fig7)</text>
<text class="t" x="656.600" y="800" textLength="59" lengthAdjust="spacingAndGlyphs">图8(fig8)</text>
<text class="t" x="734.700" y="800" textLength="48" lengthAdjust="spacingAndGlyphs">Sheet10</text>
<text class="t" x="799" y="800" textLength="48" lengthAdjust="spacingAndGlyphs">Sheet11</text>
<text class="t" x="864" y="800" textLength="48" lengthAdjust="spacingAndGlyphs">Sheet12</text>
<rect x="932" y="790" width="12" height="10" rx="1" fill="#eef3fa" stroke="#5f7ba6"/><circle cx="934" cy="790" r="2.500" fill="#f2b53a"/>
<rect x="953" y="788" width="647" height="15" fill="#7e9fcf"/>
<rect x="955" y="789" width="3" height="12" fill="#dfe9f5"/>
<path d="M966 791v9l-5-4.500z" fill="#3f5a80"/>
<rect x="973.500" y="788.500" width="520" height="13" fill="url(#th)" stroke="#8ba6c6"/>
<path d="M1231 792v7M1233 792v7M1235 792v7M1237 792v7" stroke="#7a93b2"/>
<path d="M1569 791v9l5-4.500z" fill="#3f5a80"/>
<rect x="1580" y="789" width="3" height="12" fill="#dfe9f5"/>
<rect x="1585" y="770" width="15" height="18" fill="#7e9fcf"/>
<path d="M1588 776h9l-4.500 6z" fill="#3f5a80"/>

<!-- status bar -->
<rect y="803" width="1600" height="21" fill="url(#st)"/>
<rect y="803" width="1600" height="1" fill="#eaf2fb"/>
<path d="M40 804v20M82 804v20" stroke="#a6c0e0"/>
<text class="r" x="7" y="818">就绪</text>
<text class="r" x="49" y="818">滚动</text>
<rect x="1351" y="804" width="249" height="20" fill="url(#st2)"/>
<rect x="1356.500" y="805.500" width="55" height="17" rx="1" fill="#dbe7f6" stroke="#a9c3e2"/>
<rect x="1357" y="806" width="19" height="16" fill="url(#or)"/>
<rect x="1360" y="809" width="12" height="10" fill="#fff" stroke="#667"/><path d="M1364 809v10M1368 809v10M1360 812.500h12M1360 816h12" stroke="#667"/>
<rect x="1379.500" y="808.500" width="12" height="11" fill="#cfd8e2" stroke="#667"/><rect x="1382.500" y="810.500" width="6" height="7" fill="#eef2f7" stroke="#778"/>
<rect x="1396.500" y="808.500" width="12" height="11" fill="#cfd8e2" stroke="#667"/><rect x="1400" y="809" width="5" height="6" fill="#fff" stroke="#667"/>
<text x="1420" y="818.500" font-family="Liberation Sans,sans-serif" font-size="12.500" fill="#2f4f8a">100%</text>
<path d="M1477 814h102" stroke="#dbe7f6" stroke-width="1.500"/>
<circle cx="1469" cy="813" r="7.500" fill="#dfe9f5" stroke="#6b84a8"/><path d="M1465 813h8" stroke="#3f5a80" stroke-width="2"/>
<circle cx="1587" cy="813" r="7.500" fill="#dfe9f5" stroke="#6b84a8"/><path d="M1583 813h8M1587 809v8" stroke="#3f5a80" stroke-width="2"/>
<path d="M1524 806h8v10l-4 3-4-3z" fill="#eef3fa" stroke="#6b84a8"/>

<!-- taskbar -->
<rect y="824" width="1600" height="27" fill="#d4d0c8"/>
<rect y="825" width="1600" height="1" fill="#fff"/>
<g fill="#d4d0c8" stroke="#404040">
<rect x="2.500" y="828.500" width="46" height="21"/>
<rect x="184.500" y="828.500" width="146" height="21"/>
<rect x="333.500" y="828.500" width="147" height="21"/>
<rect x="482.500" y="828.500" width="146" height="21"/>
<rect x="630.500" y="828.500" width="145" height="21"/>
<rect x="778.500" y="828.500" width="143" height="21"/>
<rect x="1069.500" y="828.500" width="145" height="21"/>
<rect x="1216.500" y="828.500" width="146" height="21"/>
</g>
<g fill="none" stroke="#fff"><path d="M3 849V829H48M185 849V829H330M334 849V829H480M483 849V829H628M631 849V829H775M779 849V829H921M1070 849V829H1214M1217 849V829H1362"/></g>
<rect x="923.500" y="828.500" width="145" height="21" fill="#0a246a" stroke="#fff"/>
<path d="M107.500 829v20M1375.500 829v20" stroke="#fff"/><path d="M106.500 829v20M1374.500 829v20" stroke="#808080"/>
<rect x="1404.500" y="828.500" width="193" height="21" fill="#d4d0c8" stroke="#808080"/>
<path d="M5 832l6-1v7H5z" fill="#e05a2a"/><path d="M12 831l6-1v8h-6z" fill="#6ab82a"/><path d="M5 839h6v6H5z" fill="#4a9ad8"/><path d="M12 839h6v7h-6z" fill="#f0c020"/>
<text x="21" y="844" font-family="Noto Sans CJK SC,sans-serif" font-size="12" fill="#000">开始</text>
<rect x="127" y="831" width="9" height="16" fill="#cbdcf2" stroke="#8ba6c6"/><path d="M129 834h5M129 838h5M129 842h5" stroke="#6b84a8"/>
<path d="M165 831l7 6-2 10h-8l-3-10z" fill="#f2efe6" stroke="#999"/><path d="M162 840l3-8 1 15z" fill="#d03020"/><path d="M166 836l5 3-3 8z" fill="#3a9a3a"/>
<rect x="188" y="832" width="14" height="15" fill="#2a4ab0" rx="1"/><rect x="190" y="832" width="9" height="6" fill="#eee"/><rect x="190" y="841" width="10" height="6" fill="#e04040"/>
<text class="b" x="208" y="844">Total Commander 7.0 ...</text>
<circle cx="346" cy="839" r="7.500" fill="#3a9a8a" stroke="#1a5a80"/><circle cx="346" cy="839" r="3" fill="#eee"/>
<text class="b" x="357" y="844">get.exe</text>
<use href="#xl" x="486" y="831" width="16" height="18"/><text class="b" x="505" y="844">Engineering Toolkit 9....</text>
<use href="#xl" x="634" y="831" width="16" height="18"/><text class="b" x="653" y="844">Progress</text>
<use href="#xl" x="781" y="831" width="16" height="18"/><text class="b" x="800" y="844">Graphic Editor 9.07b2 ...</text>
<use href="#xl" x="927" y="831" width="16" height="18"/><text class="b" x="946" y="844" style="fill:#fff">Dialog Box</text>
<use href="#xl" x="1073" y="831" width="16" height="18"/><text class="b" x="1092" y="844">6ac37001a0 - main_qa</text>
<use href="#xl" x="1220" y="831" width="16" height="18"/><text class="b" x="1239" y="844">Net Analyzer</text>
<!-- tray -->
<rect x="1385" y="835" width="14" height="10" rx="1" fill="#aaa" stroke="#888"/><path d="M1387 838h10M1387 841h10" stroke="#eee"/><path d="M1389 835l5-4 3 1" stroke="#888" fill="none"/>
<path d="M1411 836l2.500-3 2.500 3M1411 840l2.500-3 2.500 3" fill="none" stroke="#000"/>
<circle cx="1435" cy="839" r="7.500" fill="#c8d820" stroke="#5a7a10"/><path d="M1431 839h8M1435 835v8" stroke="#106010" stroke-width="2"/>
<path d="M1453 832l12 13M1465 832l-12 13" stroke="#701a80" stroke-width="3"/>
<rect x="1476" y="831" width="10" height="12" rx="2" fill="#3a78d8"/><circle cx="1481" cy="837" r="3.500" fill="#fff"/><rect x="1481" y="843" width="9" height="4" rx="1.500" fill="#50c020"/>
<ellipse cx="1507" cy="839" rx="6" ry="8" fill="#10305a"/><path d="M1504 836l6 6-3 3v-11l3 3-6 6" fill="none" stroke="#fff"/>
<text x="1551" y="848" font-family="Liberation Sans,sans-serif" font-size="11.500" fill="#111" text-anchor="middle">19:33</text>
</svg>
</body></html>
